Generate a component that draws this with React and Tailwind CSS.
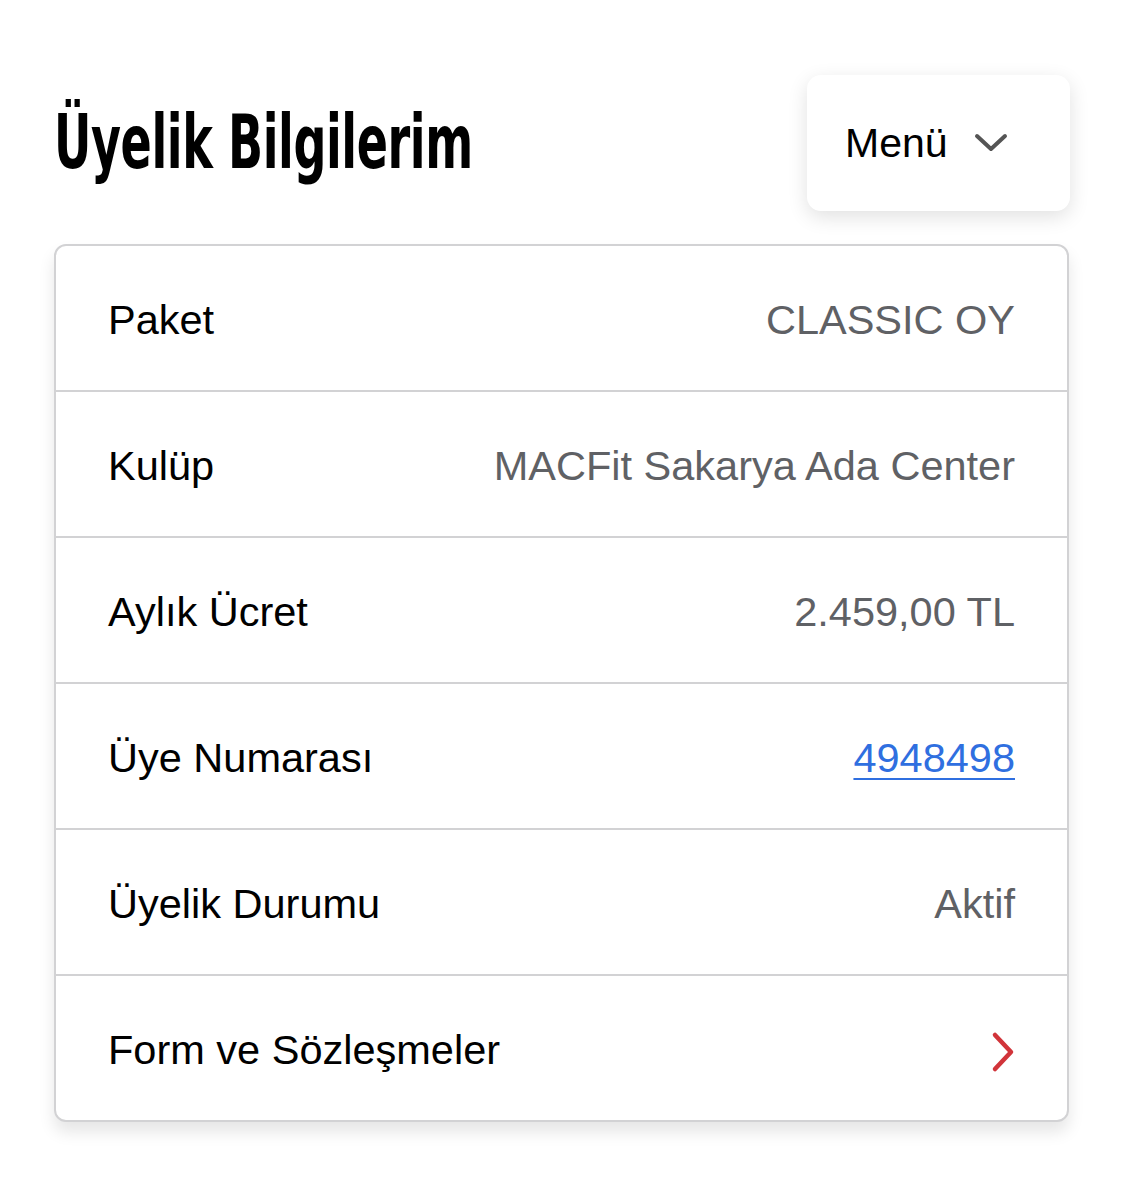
import React from "react";

const rows = [
  { label: "Paket", value: "CLASSIC OY" },
  { label: "Kulüp", value: "MACFit Sakarya Ada Center" },
  { label: "Aylık Ücret", value: "2.459,00 TL" },
  { label: "Üye Numarası", value: "4948498", link: true },
  { label: "Üyelik Durumu", value: "Aktif" },
  { label: "Form ve Sözleşmeler", chevron: true },
];

export default function App() {
  return (
    <div
      className="min-h-[1200px] w-[1123px] bg-white px-[54px] pt-[75px]"
      style={{ fontFamily: '"Liberation Sans", Arial, Helvetica, sans-serif' }}
    >
      <div className="flex items-center justify-between">
        <h1
          className="origin-left scale-x-[0.775] scale-y-[1.12] whitespace-nowrap text-[66px] font-bold leading-none tracking-[-0.5px] text-black"
          style={{ fontFamily: '"DejaVu Sans Condensed", "DejaVu Sans", sans-serif', fontStretch: "condensed" }}
        >
          Üyelik Bilgilerim
        </h1>
        <button className="-mr-px flex h-[136px] w-[263px] items-center rounded-[14px] bg-white pl-[38px] shadow-[0_6px_20px_rgba(0,0,0,0.12)]">
          <span className="text-[41px] leading-none text-black">Menü</span>
          <svg className="ml-[26px]" width="34" height="20" viewBox="0 0 34 20" fill="none">
            <path d="M3 3 L17 16 L31 3" stroke="#555555" strokeWidth="4" strokeLinecap="round" strokeLinejoin="round" />
          </svg>
        </button>
      </div>

      <div className="mt-[33px] overflow-hidden rounded-[12px] border-2 border-[#d2d2d4] bg-white shadow-[0_10px_16px_rgba(0,0,0,0.10)]">
        {rows.map((r, i) => (
          <div
            key={r.label}
            className={`flex items-center justify-between px-[52px] pt-[4px] ${i > 0 ? "h-[146px] border-t-2 border-[#d2d2d4]" : "h-[144px]"}`}
          >
            <span className="text-[41.5px] leading-none text-black">{r.label}</span>
            {r.chevron ? (
              <svg className="mt-[4px]" width="24" height="42" viewBox="0 0 24 42" fill="none">
                <path d="M4 4 L20 21 L4 38" stroke="#d1343a" strokeWidth="4.5" strokeLinecap="round" strokeLinejoin="round" />
              </svg>
            ) : r.link ? (
              <a className="text-[41.5px] leading-none text-[#2f6fe0] underline decoration-2 underline-offset-[6px]">{r.value}</a>
            ) : (
              <span className="text-[41.5px] leading-none text-[#5f6165]">{r.value}</span>
            )}
          </div>
        ))}
      </div>
    </div>
  );
}
